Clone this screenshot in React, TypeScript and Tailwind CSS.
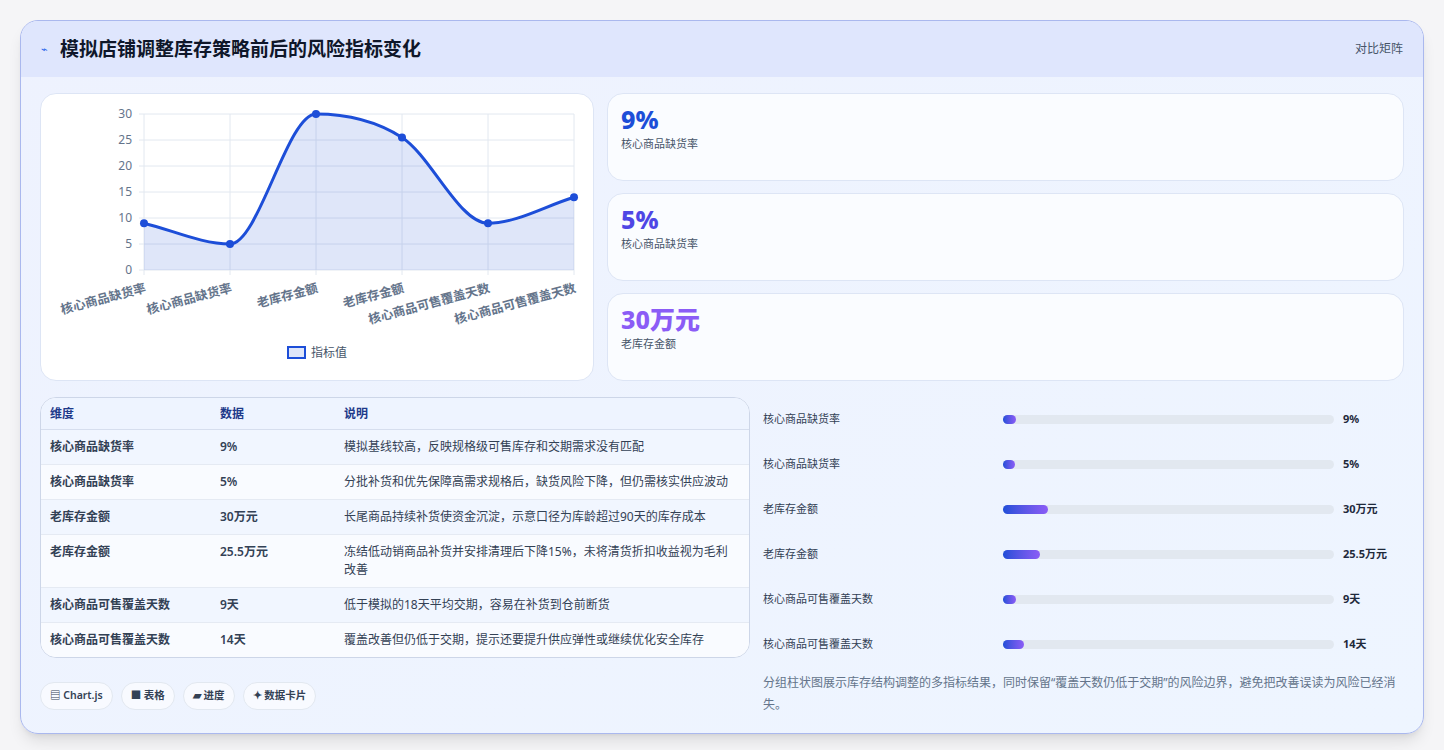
import React from "react";

const font = { fontFamily: '"Noto Sans", "Noto Sans CJK SC", sans-serif' };

const stats = [
  { v: "9%", l: "核心商品缺货率", c: "text-[#1d4ed8]" },
  { v: "5%", l: "核心商品缺货率", c: "text-[#4f46e5]" },
  { v: "30万元", l: "老库存金额", c: "text-[#8b5cf6]" },
];

const rows = [
  ["核心商品缺货率", "9%", "模拟基线较高，反映规格级可售库存和交期需求没有匹配"],
  ["核心商品缺货率", "5%", "分批补货和优先保障高需求规格后，缺货风险下降，但仍需核实供应波动"],
  ["老库存金额", "30万元", "长尾商品持续补货使资金沉淀，示意口径为库龄超过90天的库存成本"],
  ["老库存金额", "25.5万元", "冻结低动销商品补货并安排清理后下降15%，未将清货折扣收益视为毛利改善"],
  ["核心商品可售覆盖天数", "9天", "低于模拟的18天平均交期，容易在补货到仓前断货"],
  ["核心商品可售覆盖天数", "14天", "覆盖改善但仍低于交期，提示还要提升供应弹性或继续优化安全库存"],
];

const bars = [
  ["核心商品缺货率", "9%", 13],
  ["核心商品缺货率", "5%", 12],
  ["老库存金额", "30万元", 45],
  ["老库存金额", "25.5万元", 37],
  ["核心商品可售覆盖天数", "9天", 13],
  ["核心商品可售覆盖天数", "14天", 21],
] as const;

function Chart() {
  const xs = [103, 189, 275, 361, 447, 533];
  const vals = [9, 5, 30, 25.5, 9, 14];
  const ys = vals.map((v) => 176 - v * 5.2);
  const n = xs.length;
  const sec = xs.slice(1).map((x, i) => (ys[i + 1] - ys[i]) / (x - xs[i]));
  const m = xs.map((_, i) => {
    if (i === 0) return sec[0];
    if (i === n - 1) return sec[n - 2];
    if (sec[i - 1] * sec[i] <= 0) return 0;
    return (sec[i - 1] + sec[i]) / 2;
  });
  let d = `M${xs[0]},${ys[0]}`;
  for (let i = 1; i < n; i++) {
    const h = (xs[i] - xs[i - 1]) / 3;
    d += ` C${xs[i - 1] + h},${ys[i - 1] + m[i - 1] * h} ${xs[i] - h},${ys[i] - m[i] * h} ${xs[i]},${ys[i]}`;
  }
  const labels = ["核心商品缺货率", "核心商品缺货率", "老库存金额", "老库存金额", "核心商品可售覆盖天数", "核心商品可售覆盖天数"];
  return (
    <svg width="553" height="288" className="block">
      {[0, 5, 10, 15, 20, 25, 30].map((t) => (
        <g key={t}>
          <line x1="98" x2="533" y1={176 - t * 5.2} y2={176 - t * 5.2} stroke="#e2e8f0" />
          <text x="91" y={180 - t * 5.2} textAnchor="end" fontSize="12" fill="#64748b">{t}</text>
        </g>
      ))}
      {xs.map((x) => (
        <line key={x} x1={x} x2={x} y1={20} y2={181} stroke="#e2e8f0" />
      ))}
      <path d={`${d} L533,176 L103,176 Z`} fill="rgba(29,78,216,0.14)" />
      <path d={d} fill="none" stroke="#1d4ed8" strokeWidth="3" />
      {xs.map((x, i) => (
        <circle key={i} cx={x} cy={ys[i]} r="4" fill="#1d4ed8" />
      ))}
      {labels.map((l, i) => (
        <text key={i} transform={`translate(${xs[i]},${188}) rotate(-15)`} textAnchor="end" fontSize="12.5" fontWeight="600" fill="#64748b" dy="10">{l}</text>
      ))}
      <rect x="247" y="253" width="17" height="11" fill="rgba(29,78,216,0.14)" stroke="#1d4ed8" strokeWidth="2" />
      <text x="270" y="263" fontSize="12" fill="#475569">指标值</text>
    </svg>
  );
}

export default function App() {
  return (
    <div style={font} className="min-h-[750px] bg-[#f5f5f7] p-5">
      <div className="overflow-hidden rounded-[18px] border border-[#aab8ee] bg-gradient-to-br from-[#eef2fe] to-[#eef5ff] shadow-lg">
        <div className="flex h-[56px] items-center justify-between bg-[#dfe6fd] px-5">
          <div className="flex items-center gap-3">
            <span className="text-[11px] text-[#2563eb]">⌁</span>
            <h1 className="text-[19px] font-bold text-[#0f172a]">模拟店铺调整库存策略前后的风险指标变化</h1>
          </div>
          <span className="text-xs text-[#475569]">对比矩阵</span>
        </div>
        <div className="flex flex-col gap-4 px-[19px] pb-[17px] pt-[16px]">
          <div className="flex gap-[13px]">
            <div className="h-[288px] w-[554px] rounded-2xl border border-[#dde5f5] bg-white">
              <Chart />
            </div>
            <div className="flex flex-1 flex-col gap-[12px]">
              {stats.map((s, i) => (
                <div key={i} className="h-[88px] rounded-2xl border border-[#dde5f5] bg-[#fafcff] px-[13px] pt-[10px]">
                  <div className={`text-[25px] font-extrabold leading-[30px] ${s.c}`}>{s.v}</div>
                  <div className="mt-[2px] text-[11px] text-[#475569]">{s.l}</div>
                </div>
              ))}
            </div>
          </div>
          <div className="flex gap-[13px]">
            <div className="w-[710px]">
              <div className="overflow-hidden rounded-2xl border border-[#cdd6e8] bg-white text-[12px] text-[#334155]">
                <div className="flex h-[32px] items-center border-b border-[#d6deee] bg-[#eef4ff] font-semibold text-[#1e3a8a]">
                  <div className="w-[170px] pl-[9px]">维度</div>
                  <div className="w-[124px] pl-[9px]">数据</div>
                  <div className="flex-1 pl-[9px]">说明</div>
                </div>
                {rows.map((r, i) => (
                  <div key={i} className={`flex border-b border-[#e5eaf3] py-[8px] leading-[18px] last:border-b-0 ${i % 2 ? "bg-[#f9fbff]" : "bg-[#f1f6ff]"}`}>
                    <div className="w-[170px] pl-[9px] font-semibold">{r[0]}</div>
                    <div className="w-[124px] pl-[9px] font-semibold">{r[1]}</div>
                    <div className="flex-1 pl-[9px] pr-3">{r[2]}</div>
                  </div>
                ))}
              </div>
              <div className="mt-[24px] flex gap-[8px] text-[10.5px] font-semibold text-[#334155]">
                {["▤ Chart.js", "■ 表格", "▰ 进度", "✦ 数据卡片"].map((c) => (
                  <span key={c} className="rounded-full border border-[#e2e8f0] bg-[#f8faff] px-[9px] py-[5px]">{c}</span>
                ))}
              </div>
            </div>
            <div className="flex flex-1 flex-col">
              {bars.map(([l, v, w], i) => (
                <div key={i} className="flex h-[45px] items-center text-[11px]">
                  <div className="w-[240px] text-[#334155]">{l}</div>
                  <div className="h-[9px] w-[331px] rounded-full bg-[#e2e8f0]">
                    <div className="h-full rounded-full bg-gradient-to-r from-[#1d4ed8] to-[#8b5cf6]" style={{ width: w }} />
                  </div>
                  <div className="ml-[9px] font-bold text-[#1e293b]">{v}</div>
                </div>
              ))}
              <p className="mt-[5px] pr-2 text-[12px] leading-[22px] text-[#64748b]">
                分组柱状图展示库存结构调整的多指标结果，同时保留“覆盖天数仍低于交期”的风险边界，避免把改善误读为风险已经消失。
              </p>
            </div>
          </div>
        </div>
      </div>
    </div>
  );
}
